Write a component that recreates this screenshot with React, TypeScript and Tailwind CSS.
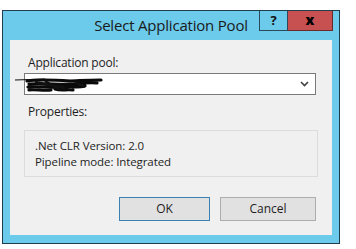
import React from "react";

const FONT = "font-['Open_Sans','Noto_Sans',sans-serif]";

function Chevron() {
  return (
    <svg width="9" height="6" viewBox="0 0 9 6" className="shrink-0">
      <path d="M1 1 L4.5 4.5 L8 1" fill="none" stroke="#404040" strokeWidth="1.6" />
    </svg>
  );
}

function Scribble() {
  return (
    <svg
      width="90"
      height="18"
      viewBox="0 0 90 18"
      className="absolute left-[-10px] top-[3px]"
    >
      <path d="M0 3 L30 2" stroke="#111" strokeWidth="1.2" fill="none" />
      <path
        d="M12 4 C25 2 40 3 55 4 C62 4 70 3 86 3 M14 7 C30 6 45 8 60 7 C68 6 75 5 82 6 M13 10 C25 9 38 11 52 10 C58 9 62 11 70 9 M14 13 C20 12 28 14 36 13 M40 12 C46 14 52 12 58 13"
        stroke="#0a0a0a"
        strokeWidth="3.2"
        strokeLinecap="round"
        fill="none"
      />
      <path d="M20 5 L50 11 M30 4 L44 12 M60 5 L70 10" stroke="#111" strokeWidth="2.5" fill="none" />
    </svg>
  );
}

export default function App() {
  return (
    <div className={`w-[356px] h-[249px] bg-white pt-[10px] pl-[2px] ${FONT}`}>
      <div className="w-[338px] h-[234px] border border-[#213c4c] bg-[#6ccaea] flex flex-col">
        {/* Title bar */}
        <div className="relative h-[29px] shrink-0">
          <div className="text-center text-[15px] leading-[29px] text-[#1a1a1a] tracking-[-0.2px]">
            Select Application Pool
          </div>
          <div className="absolute right-[6px] top-0 flex">
            <div className="w-[29px] h-[20px] border border-t-0 border-[#2a4a5c] flex items-center justify-center text-[13px] font-bold text-[#111] leading-none">
              ?
            </div>
            <div className="w-[45px] h-[20px] bg-[#c75050] border-b border-r border-[#6a2a2a] flex items-center justify-center text-[14px] font-extrabold text-black leading-none pb-[2px]">
              x
            </div>
          </div>
        </div>

        {/* Body */}
        <div className="flex-1 mx-[7px] mb-[8px] bg-[#f0f0f0] flex flex-col pl-[14px] pr-[14px] text-[12px] text-[#1e1e1e]">
          <div className="mt-[15px] pl-[4px] leading-[16px] tracking-[-0.2px]">Application pool:</div>
          <div className="relative mt-[2px] mr-[2px] h-[22px] border border-[#7a7a7a] bg-white flex items-center justify-end pr-[6px]">
            <Scribble />
            <Chevron />
          </div>
          <div className="mt-[9px] pl-[4px] leading-[16px] tracking-[-0.2px]">Properties:</div>
          <div className="mt-[10px] h-[47px] border border-[#dcdcdc] flex flex-col justify-center pl-[10px] pt-[1px] text-[11.5px] leading-[16px] tracking-[-0.1px]">
            <div>.Net CLR Version: 2.0</div>
            <div>Pipeline mode: Integrated</div>
          </div>
          <div className="mt-[20px] flex justify-end gap-[10px] mr-[2px]">
            <button className="w-[91px] h-[24px] bg-[#e1e1e1] border border-[#3c7fb1] text-[12px] text-[#1e1e1e]">
              OK
            </button>
            <button className="w-[96px] h-[24px] bg-[#e1e1e1] border border-[#adadad] text-[12px] text-[#1e1e1e]">
              Cancel
            </button>
          </div>
        </div>
      </div>
    </div>
  );
}
